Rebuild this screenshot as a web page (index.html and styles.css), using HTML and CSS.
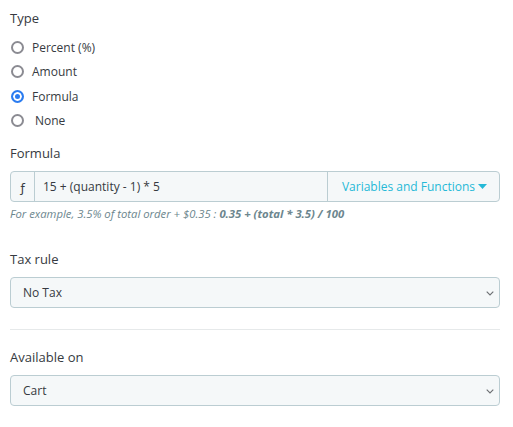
FILE: index.html
```html
<!DOCTYPE html>
<html>
<head>
<meta charset="utf-8">
<link rel="stylesheet" href="styles.css">
</head>
<body>
<div class="form">
  <div class="group">
    <div class="label">Type</div>
    <div class="radios">
      <label class="radio"><input type="radio" name="type"><span>Percent (%)</span></label>
      <label class="radio"><input type="radio" name="type"><span>Amount</span></label>
      <label class="radio"><input type="radio" name="type" checked><span>Formula</span></label>
      <label class="radio"><input type="radio" name="type"><span class="none">None</span></label>
    </div>
  </div>

  <div class="group formula">
    <div class="label">Formula</div>
    <div class="input-group">
      <span class="addon">ƒ</span>
      <input class="ig-input" type="text" value="15 + (quantity - 1) * 5">
      <button class="ig-btn" type="button">Variables and Functions<svg class="caret" width="9" height="5" viewBox="0 0 9 5"><path d="M0 0h9L4.5 5z" fill="#25b9d7"/></svg></button>
    </div>
    <div class="help">For example, 3.5% of total order + $0.35 : <b>0.35 + (total * 3.5) / 100</b></div>
  </div>

  <div class="group tax">
    <div class="label">Tax rule</div>
    <div class="select-wrap">
      <select class="select"><option>No Tax</option></select>
      <svg class="chev" width="8" height="5" viewBox="0 0 8 5"><path d="M0.7 0.7L4 4L7.3 0.7" fill="none" stroke="#6c6f73" stroke-width="1.1"/></svg>
    </div>
  </div>

  <hr class="sep">

  <div class="group avail">
    <div class="label">Available on</div>
    <div class="select-wrap">
      <select class="select"><option>Cart</option></select>
      <svg class="chev" width="8" height="5" viewBox="0 0 8 5"><path d="M0.7 0.7L4 4L7.3 0.7" fill="none" stroke="#6c6f73" stroke-width="1.1"/></svg>
    </div>
  </div>
</div>
</body>
</html>
```

FILE: styles.css
```css
html, body {
  margin: 0;
  padding: 0;
  background: #fff;
}
body {
  font-family: "Open Sans", "Noto Sans", sans-serif;
  color: #363a41;
}
.form {
  width: 490px;
  padding: 8px 0 0 10px;
}
.label {
  font-size: 13px;
  line-height: 20px;
  color: #363a41;
}
.radios {
  display: flex;
  flex-direction: column;
  margin-top: 7px;
}
.radio {
  display: flex;
  align-items: center;
  height: 24.5px;
  font-size: 12px;
  color: #363a41;
}
.radio input {
  appearance: none;
  -webkit-appearance: none;
  box-sizing: border-box;
  margin: 0 8px 0 1px;
  width: 13px;
  height: 13px;
  border: 2px solid #8b8b92;
  border-radius: 50%;
  background: #fff;
}
.radio input:checked {
  border-color: #2b7cf0;
  background: #2b7cf0;
  box-shadow: inset 0 0 0 2px #fff;
}
.radio .none {
  padding-left: 3px;
}
.formula {
  margin-top: 10px;
}
.formula .label {
  margin-bottom: 8px;
}
.input-group {
  display: flex;
  height: 31px;
  box-sizing: border-box;
  border: 1px solid #bbcdd2;
  border-radius: 4px;
  background: #f5f8f9;
  overflow: hidden;
}
.addon {
  width: 23px;
  flex: none;
  display: flex;
  align-items: center;
  justify-content: center;
  border-right: 1px solid #bbcdd2;
  font-size: 13px;
  color: #363a41;
}
.ig-input {
  flex: 1;
  min-width: 0;
  border: 0;
  background: transparent;
  padding: 0 0 0 8px;
  font-family: inherit;
  font-size: 12px;
  color: #363a41;
  outline: none;
}
.ig-btn {
  flex: none;
  width: 172px;
  border: 0;
  border-left: 1px solid #bbcdd2;
  background: transparent;
  display: flex;
  align-items: center;
  justify-content: center;
  gap: 3px;
  padding: 0 0 0 2px;
  font-family: inherit;
  font-size: 12px;
  color: #25b9d7;
}
.caret {
  display: block;
}
.help {
  margin-top: 4px;
  font-size: 11.3px;
  line-height: 16px;
  font-style: italic;
  color: #6c868e;
}
.help b {
  font-weight: 700;
}
.tax {
  margin-top: 27px;
}
.tax .label, .avail .label {
  margin-bottom: 8px;
}
.select-wrap {
  position: relative;
}
.select {
  appearance: none;
  -webkit-appearance: none;
  display: block;
  width: 100%;
  height: 31px;
  box-sizing: border-box;
  border: 1px solid #bbcdd2;
  border-radius: 4px;
  background: #f5f8f9;
  padding: 0 12px;
  font-family: inherit;
  font-size: 12px;
  color: #363a41;
  outline: none;
}
.chev {
  position: absolute;
  right: 6px;
  top: 14px;
}
.sep {
  margin: 21px 0 0;
  border: 0;
  border-top: 1px solid #e6e9ea;
  height: 0;
}
.avail {
  margin-top: 17px;
}
```
